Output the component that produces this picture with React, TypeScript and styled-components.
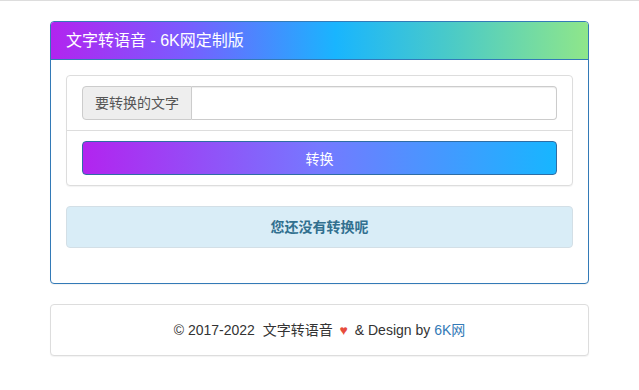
import styled, { createGlobalStyle } from "styled-components";

const GlobalStyle = createGlobalStyle`
    html, body {
        margin: 0;
        padding: 0;
        background: #fff;
    }
    body {
        font-family: "Liberation Sans", "Noto Sans CJK SC", sans-serif;
        font-size: 14px;
        line-height: 20px;
        color: #333;
    }
    * {
        box-sizing: border-box;
    }
`;

const TopRule = styled.div`
    border-top: 1px solid #ddd;
`;

const Container = styled.div`
    width: 539px;
    margin: 20px auto 0;
`;

const Panel = styled.div<{ $primary?: boolean }>`
    border: 1px solid ${props => (props.$primary ? "#337ab7" : "#ddd")};
    border-radius: 4px;
    background: #fff;
    margin-bottom: 20px;
    box-shadow: 0 1px 1px rgba(0, 0, 0, 0.05);
    overflow: hidden;
`;

const PanelHeading = styled.div`
    padding: 10px 15px;
    background: linear-gradient(to right, #b224ef 0%, #7a5cff 25%, #19b5fe 53%, #4ccbc6 75%, #8fe68a 100%);
    border-bottom: 1px solid #337ab7;
    color: #fff;
    font-size: 16px;
    line-height: 17px;
`;

const PanelBody = styled.div`
    padding: 15px;
`;

const FormSection = styled.div<{ $divided?: boolean }>`
    padding: 10px 15px;
    border-top: ${props => (props.$divided ? "1px solid #ddd" : "none")};
`;

const InputGroup = styled.div`
    display: flex;
    height: 34px;
`;

const Addon = styled.span`
    display: flex;
    align-items: center;
    padding: 6px 12px;
    background: #eee;
    border: 1px solid #ccc;
    border-radius: 4px 0 0 4px;
    color: #555;
    font-size: 14px;
    white-space: nowrap;
`;

const TextInput = styled.input`
    flex: 1;
    min-width: 0;
    height: 34px;
    padding: 6px 12px;
    border: 1px solid #ccc;
    border-left: none;
    border-radius: 0 4px 4px 0;
    font-family: inherit;
    font-size: 14px;
    outline: none;
    box-shadow: inset 0 1px 1px rgba(0, 0, 0, 0.075);
`;

const ConvertButton = styled.button`
    display: block;
    width: 100%;
    height: 34px;
    border: 1px solid #2e6da4;
    border-radius: 4px;
    background: linear-gradient(to right, #b224ef 0%, #7579ff 50%, #17b6ff 100%);
    color: #fff;
    font-family: inherit;
    font-size: 14px;
    cursor: pointer;
`;

const Alert = styled.div`
    padding: 10px 15px;
    margin-bottom: 20px;
    background: #d9edf7;
    border: 1px solid #d3dfe6;
    border-radius: 4px;
    color: #31708f;
    font-weight: bold;
    text-align: center;
    line-height: 20px;
`;

const FooterBody = styled.div`
    padding: 15px;
    text-align: center;
    color: #333;
    line-height: 20px;
`;

const Heart = styled.span`
    color: #e74c3c;
    margin: 0 3px;
`;

const Link = styled.a`
    color: #337ab7;
    text-decoration: none;
`;

const App = () => {
    return (
        <>
            <GlobalStyle />
            <TopRule />
            <Container>
                <Panel $primary>
                    <PanelHeading>文字转语音 - 6K网定制版</PanelHeading>
                    <PanelBody>
                        <Panel>
                            <FormSection>
                                <InputGroup>
                                    <Addon>要转换的文字</Addon>
                                    <TextInput type="text" />
                                </InputGroup>
                            </FormSection>
                            <FormSection $divided>
                                <ConvertButton>转换</ConvertButton>
                            </FormSection>
                        </Panel>
                        <Alert>您还没有转换呢</Alert>
                    </PanelBody>
                </Panel>
                <Panel>
                    <FooterBody>
                        © 2017-2022 &nbsp;文字转语音 <Heart>♥</Heart> &amp; Design by <Link href="#">6K网</Link>
                    </FooterBody>
                </Panel>
            </Container>
        </>
    );
};

export default App;
